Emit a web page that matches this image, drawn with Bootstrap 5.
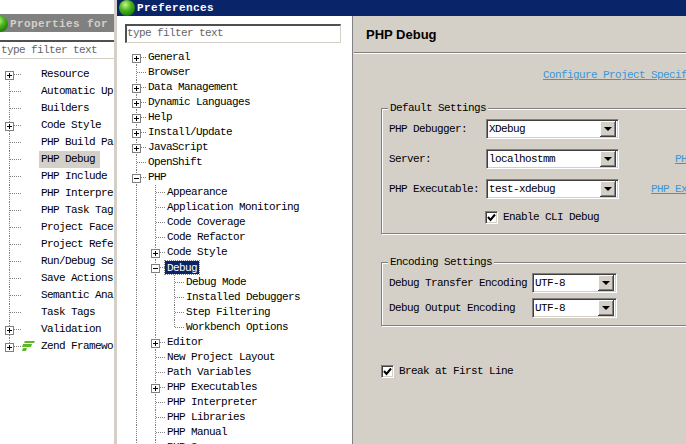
<!DOCTYPE html>
<html lang="en">
<head>
<meta charset="utf-8">
<title>Preferences</title>
<link rel="stylesheet" href="https://cdn.jsdelivr.net/npm/bootstrap@5.3.0/dist/css/bootstrap.min.css">
<style>
html,body{height:444px;overflow:hidden}
body{width:686px;background:#fff;color:#000;font:11px/14px "Liberation Mono",monospace;letter-spacing:-.6px}
.pane-back{width:114px;height:444px;overflow:hidden}
.stripe{width:3px;height:444px;background:#d4d0c8}
.win{width:569px;height:444px}
.ttl-back{height:18px;margin-top:14px;background:#808080;color:#d4d0c8;font-weight:700;letter-spacing:.4px;white-space:nowrap;overflow:hidden;padding-left:10px;line-height:20px;position:relative}
.ttl-back svg{position:absolute;left:-9px;top:1px}
.flt-back{height:19px;margin-top:8px;border-top:2px solid #505050;border-bottom:1px solid #d4d0c8;color:#666;padding-left:1px;line-height:16px;white-space:nowrap}
.ttl-win{height:16px;background:#0a246a;color:#fff;font-weight:700;letter-spacing:.4px;line-height:16px;padding-left:20px;position:relative}
.ttl-win svg{position:absolute;left:1px;top:0}
.side{width:235px;height:428px;overflow:hidden}
.flt-win{height:19px;margin:8px 0 7px 8px;width:216px;border:1px solid #d4d0c8;border-top:2px solid #505050;border-left:2px solid #505050;color:#666;line-height:15px}
.vsep{width:2px;height:428px;background:#d4d0c8;border-left:1px solid #808080}
.mainp{width:332px;height:428px;background:#d4d0c8;overflow:hidden}
.hd{height:36px;padding:11px 0 0 12px;font:700 13px/16px "Liberation Sans",sans-serif;letter-spacing:0}
.hrl{height:2px;background:#808080;border-bottom:1px solid #fff}
.blue{color:#3a96d8;text-decoration:underline;white-space:nowrap}
.cfg{padding:14px 0 0 189px;height:47px;white-space:nowrap;overflow:hidden}
.grp{width:320px;margin:0 0 0 27px;border:1px solid #808080;box-shadow:inset 1px 1px 0 #fff,1px 1px 0 #fff;padding:4px 0 0 7px;min-width:0}
.grp legend{float:none;width:auto;margin:0 0 0 -1px;padding:0 2px;font-size:11px;line-height:14px;background:#d4d0c8;letter-spacing:-.6px}
.g1{padding-bottom:9px}
.g2{padding-bottom:7px;margin-top:21px}
.lb1{width:97px;white-space:nowrap}
.lb2{width:143px;white-space:nowrap}
.cb{height:20px;background:#fff;border:1px solid;border-color:#808080 #fff #fff #808080;box-shadow:inset 1px 1px 0 #404040,inset -1px -1px 0 #d4d0c8;padding:2px;flex:none}
.cb1{width:133px}
.cb2{width:85px}
.cb-t{line-height:14px}
.cb-b{width:16px;height:16px;background:#d4d0c8;box-shadow:inset 1px 1px 0 #fff,inset -1px -1px 0 #808080;border-right:1px solid #404040;border-bottom:1px solid #404040;flex:none}
.tri{width:0;height:0;border-style:solid;border-width:4px 4px 0;border-color:#000 transparent transparent}
.lk1{margin-left:56px}
.lk2{margin-left:32px}
.gap10{margin-top:10px}
.gap5{margin-top:5px}
.chk{width:13px;height:13px;background:#fff;border:1px solid;border-color:#808080 #fff #fff #808080;box-shadow:inset 1px 1px 0 #404040,inset -1px -1px 0 #d4d0c8;flex:none;padding:1px;margin-right:5px}
.chk svg{display:block}
.c-cli{margin:11px 0 0 96px}
.c-brk{margin:38px 0 0 27px}
.tr-win{padding-left:19px}
.tr-back{padding-left:9px;margin-top:7px}
.rw{height:15px;white-space:nowrap}
.tr-back .rw{height:17px}
.gd{width:19px;height:100%;flex:none;background:repeating-linear-gradient(to bottom,#808080 0 1px,transparent 1px 2px) left top/1px 100% no-repeat}
.br{position:relative;width:12px;height:100%;flex:none;background:repeating-linear-gradient(to bottom,#808080 0 1px,transparent 1px 2px) left top/1px 100% no-repeat,repeating-linear-gradient(to right,#808080 0 1px,transparent 1px 2px) 1px 50%/9px 1px no-repeat}
.br.fst{background-size:1px 50%,9px 1px;background-position:left bottom,1px 50%}
.br.lst{background-size:1px 50%,9px 1px}
.tr-back .br{width:32px;background-size:1px 100%,11px 1px}
.tr-back .br.lst{background-size:1px 50%,11px 1px}
.tr-back .br.fst{background-size:1px 50%,11px 1px;background-position:left bottom,1px 50%}
.ex{position:absolute;left:-4px;top:50%;margin-top:-4px;width:9px;height:9px;background:#fff;border:1px solid #808080}
.ex::before{content:"";position:absolute;left:1px;top:3px;width:5px;height:1px;background:#000}
.ex.pl::after{content:"";position:absolute;left:3px;top:1px;width:1px;height:5px;background:#000}
.sel{background:#0a246a;color:#fff;outline:1px dotted #808080;margin-left:-2px;padding:0 2px;line-height:13px;height:13px;align-self:center}
.selb{background:#d4d0c8;margin-left:-2px;padding:0 5px 0 2px;height:17px;line-height:17px}
.tx{line-height:15px}
.tr-back .tx{line-height:17px}
.zf{position:absolute;left:13px;top:3px}
</style>
</head>
<body class="d-flex">
<div class="pane-back">
  <div class="ttl-back"><svg width="18" height="18" viewBox="0 0 18 18"><defs><radialGradient id="ga" cx=".4" cy=".3" r=".7"><stop offset="0" stop-color="#c8f58a"/><stop offset=".5" stop-color="#4cb81c"/><stop offset="1" stop-color="#1e7a10"/></radialGradient></defs><circle cx="9" cy="9" r="8" fill="url(#ga)"/></svg>Properties for</div>
  <div class="flt-back">type filter text</div>
  <div class="tr-back">
    <div class="rw d-flex"><span class="br fst"><span class="ex pl"></span></span><span class="tx">Resource</span></div>
    <div class="rw d-flex"><span class="br"></span><span class="tx">Automatic Up</span></div>
    <div class="rw d-flex"><span class="br"></span><span class="tx">Builders</span></div>
    <div class="rw d-flex"><span class="br"><span class="ex pl"></span></span><span class="tx">Code Style</span></div>
    <div class="rw d-flex"><span class="br"></span><span class="tx">PHP Build Pa</span></div>
    <div class="rw d-flex"><span class="br"></span><span class="tx selb">PHP Debug</span></div>
    <div class="rw d-flex"><span class="br"></span><span class="tx">PHP Include</span></div>
    <div class="rw d-flex"><span class="br"></span><span class="tx">PHP Interpre</span></div>
    <div class="rw d-flex"><span class="br"></span><span class="tx">PHP Task Tag</span></div>
    <div class="rw d-flex"><span class="br"></span><span class="tx">Project Face</span></div>
    <div class="rw d-flex"><span class="br"></span><span class="tx">Project Refe</span></div>
    <div class="rw d-flex"><span class="br"></span><span class="tx">Run/Debug Se</span></div>
    <div class="rw d-flex"><span class="br"></span><span class="tx">Save Actions</span></div>
    <div class="rw d-flex"><span class="br"></span><span class="tx">Semantic Ana</span></div>
    <div class="rw d-flex"><span class="br"></span><span class="tx">Task Tags</span></div>
    <div class="rw d-flex"><span class="br"><span class="ex pl"></span></span><span class="tx">Validation</span></div>
    <div class="rw d-flex"><span class="br lst"><span class="ex pl"></span><svg class="zf" width="13" height="11" viewBox="0 0 13 11"><polygon points="3,0 13,0 12,2 2,2" fill="#5cb82a"/><polygon points="1,3 10,3 9,6 0,6" fill="#5cb82a"/><polygon points="1,7 5,7 4,10 0,10" fill="#5cb82a"/></svg></span><span class="tx">Zend Framewo</span></div>
  </div>
</div>
<div class="stripe"></div>
<div class="win">
  <div class="ttl-win"><svg width="18" height="18" viewBox="0 0 18 18"><defs><radialGradient id="gb" cx=".4" cy=".3" r=".7"><stop offset="0" stop-color="#c8f58a"/><stop offset=".5" stop-color="#4cb81c"/><stop offset="1" stop-color="#1e7a10"/></radialGradient></defs><circle cx="9" cy="8" r="8" fill="url(#gb)"/></svg>Preferences</div>
  <div class="d-flex">
    <div class="side">
      <div class="flt-win">type filter text</div>
      <div class="tr-win">
        <div class="rw d-flex"><span class="br fst"><span class="ex pl"></span></span><span class="tx">General</span></div>
        <div class="rw d-flex"><span class="br"></span><span class="tx">Browser</span></div>
        <div class="rw d-flex"><span class="br"><span class="ex pl"></span></span><span class="tx">Data Management</span></div>
        <div class="rw d-flex"><span class="br"><span class="ex pl"></span></span><span class="tx">Dynamic Languages</span></div>
        <div class="rw d-flex"><span class="br"><span class="ex pl"></span></span><span class="tx">Help</span></div>
        <div class="rw d-flex"><span class="br"><span class="ex pl"></span></span><span class="tx">Install/Update</span></div>
        <div class="rw d-flex"><span class="br"><span class="ex pl"></span></span><span class="tx">JavaScript</span></div>
        <div class="rw d-flex"><span class="br"></span><span class="tx">OpenShift</span></div>
        <div class="rw d-flex"><span class="br"><span class="ex"></span></span><span class="tx">PHP</span></div>
        <div class="rw d-flex"><span class="gd"></span><span class="br"></span><span class="tx">Appearance</span></div>
        <div class="rw d-flex"><span class="gd"></span><span class="br"></span><span class="tx">Application Monitoring</span></div>
        <div class="rw d-flex"><span class="gd"></span><span class="br"></span><span class="tx">Code Coverage</span></div>
        <div class="rw d-flex"><span class="gd"></span><span class="br"></span><span class="tx">Code Refactor</span></div>
        <div class="rw d-flex"><span class="gd"></span><span class="br"><span class="ex pl"></span></span><span class="tx">Code Style</span></div>
        <div class="rw d-flex"><span class="gd"></span><span class="br"><span class="ex"></span></span><span class="tx sel">Debug</span></div>
        <div class="rw d-flex"><span class="gd"></span><span class="gd"></span><span class="br"></span><span class="tx">Debug Mode</span></div>
        <div class="rw d-flex"><span class="gd"></span><span class="gd"></span><span class="br"></span><span class="tx">Installed Debuggers</span></div>
        <div class="rw d-flex"><span class="gd"></span><span class="gd"></span><span class="br"></span><span class="tx">Step Filtering</span></div>
        <div class="rw d-flex"><span class="gd"></span><span class="gd"></span><span class="br lst"></span><span class="tx">Workbench Options</span></div>
        <div class="rw d-flex"><span class="gd"></span><span class="br"><span class="ex pl"></span></span><span class="tx">Editor</span></div>
        <div class="rw d-flex"><span class="gd"></span><span class="br"></span><span class="tx">New Project Layout</span></div>
        <div class="rw d-flex"><span class="gd"></span><span class="br"></span><span class="tx">Path Variables</span></div>
        <div class="rw d-flex"><span class="gd"></span><span class="br"><span class="ex pl"></span></span><span class="tx">PHP Executables</span></div>
        <div class="rw d-flex"><span class="gd"></span><span class="br"></span><span class="tx">PHP Interpreter</span></div>
        <div class="rw d-flex"><span class="gd"></span><span class="br"></span><span class="tx">PHP Libraries</span></div>
        <div class="rw d-flex"><span class="gd"></span><span class="br"></span><span class="tx">PHP Manual</span></div>
        <div class="rw d-flex"><span class="gd"></span><span class="br"></span><span class="tx">PHP S</span></div>
      </div>
    </div>
    <div class="vsep"></div>
    <div class="mainp">
      <div class="hd">PHP Debug</div>
      <div class="hrl"></div>
      <div class="cfg"><span class="blue">Configure Project Specif</span></div>
      <fieldset class="grp g1">
        <legend>Default Settings</legend>
        <div class="d-flex align-items-center"><span class="lb1">PHP Debugger:</span><div class="cb cb1 d-flex justify-content-between align-items-center"><span class="cb-t">XDebug</span><span class="cb-b d-flex align-items-center justify-content-center"><span class="tri"></span></span></div></div>
        <div class="d-flex align-items-center gap10"><span class="lb1">Server:</span><div class="cb cb1 d-flex justify-content-between align-items-center"><span class="cb-t">localhostmm</span><span class="cb-b d-flex align-items-center justify-content-center"><span class="tri"></span></span></div><a class="blue lk1">PH</a></div>
        <div class="d-flex align-items-center gap10"><span class="lb1">PHP Executable:</span><div class="cb cb1 d-flex justify-content-between align-items-center"><span class="cb-t">test-xdebug</span><span class="cb-b d-flex align-items-center justify-content-center"><span class="tri"></span></span></div><a class="blue lk2">PHP Ex</a></div>
        <div class="d-flex align-items-center c-cli"><span class="chk"><svg width="9" height="9" viewBox="0 0 9 9"><path d="M1 4l2.500 3L8 1.500" fill="none" stroke="#000" stroke-width="2"/></svg></span><span>Enable CLI Debug</span></div>
      </fieldset>
      <fieldset class="grp g2">
        <legend>Encoding Settings</legend>
        <div class="d-flex align-items-center"><span class="lb2">Debug Transfer Encoding</span><div class="cb cb2 d-flex justify-content-between align-items-center"><span class="cb-t">UTF-8</span><span class="cb-b d-flex align-items-center justify-content-center"><span class="tri"></span></span></div></div>
        <div class="d-flex align-items-center gap5"><span class="lb2">Debug Output Encoding</span><div class="cb cb2 d-flex justify-content-between align-items-center"><span class="cb-t">UTF-8</span><span class="cb-b d-flex align-items-center justify-content-center"><span class="tri"></span></span></div></div>
      </fieldset>
      <div class="d-flex align-items-center c-brk"><span class="chk"><svg width="9" height="9" viewBox="0 0 9 9"><path d="M1 4l2.500 3L8 1.500" fill="none" stroke="#000" stroke-width="2"/></svg></span><span>Break at First Line</span></div>
    </div>
  </div>
</div>
</body>
</html>
